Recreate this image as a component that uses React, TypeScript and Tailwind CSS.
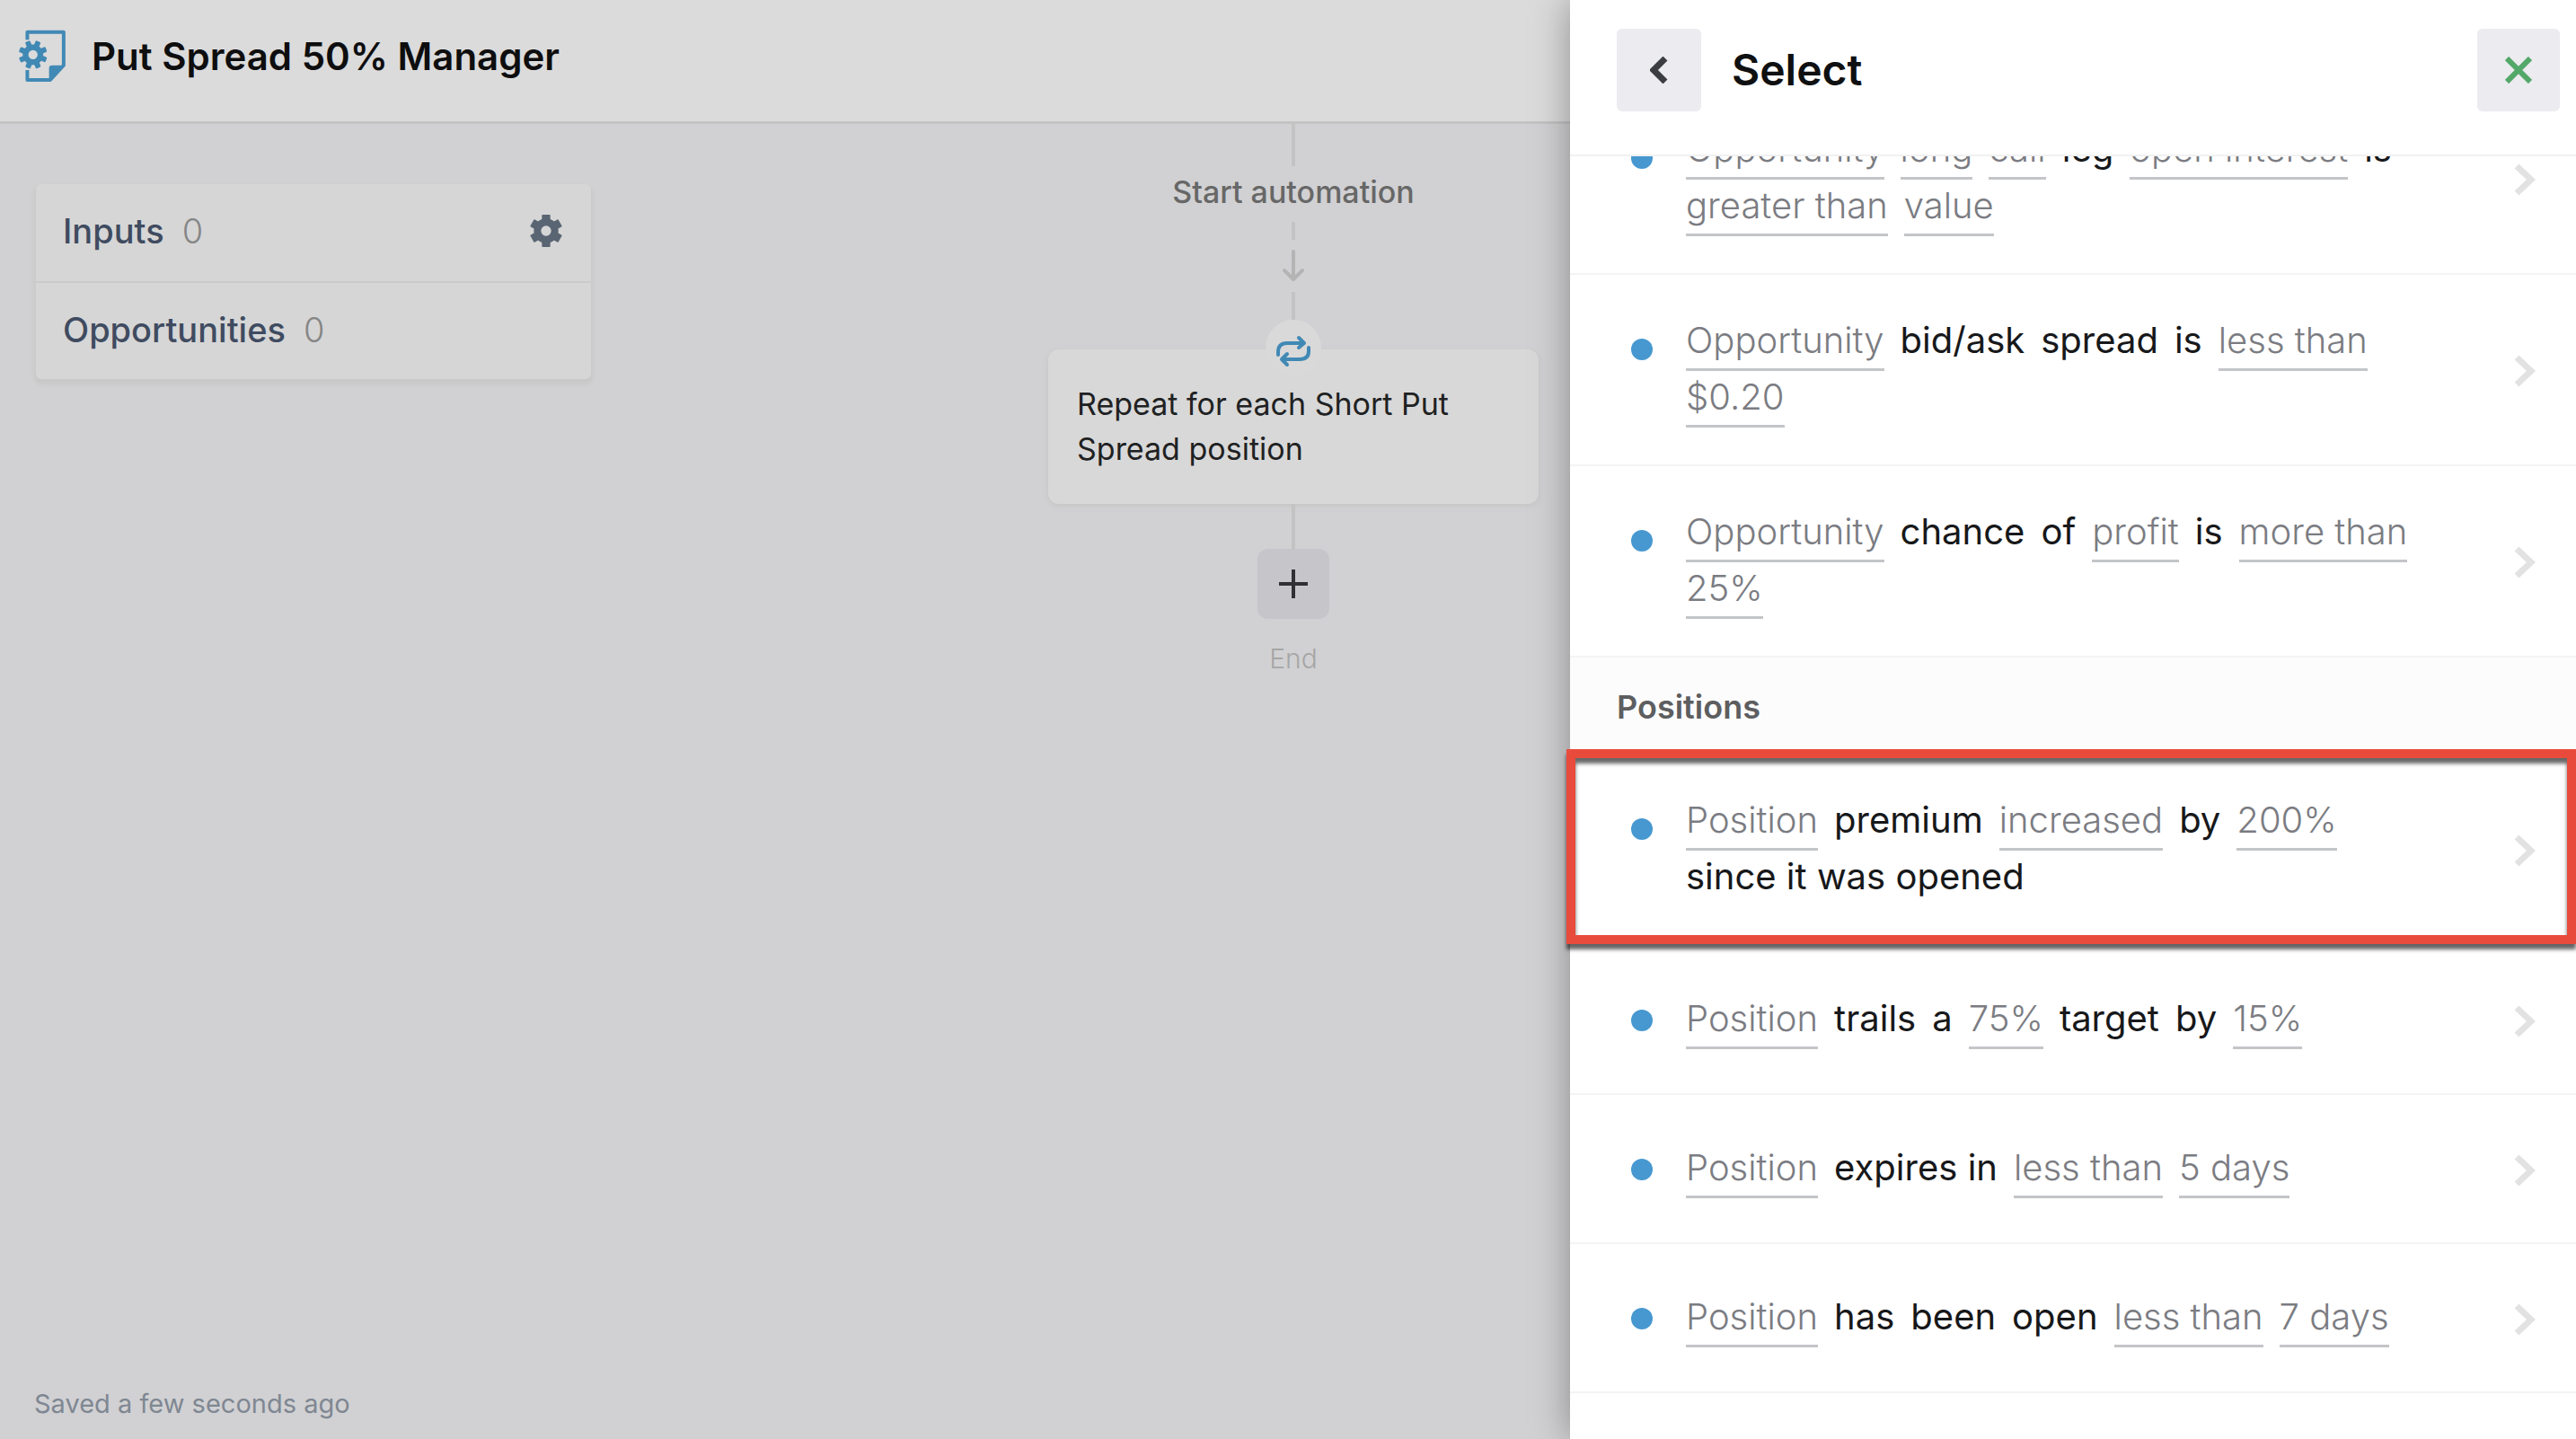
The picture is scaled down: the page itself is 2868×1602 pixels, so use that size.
interface Token {
  text: string;
  param?: boolean;
}

interface Condition {
  tokens: Token[];
  highlighted?: boolean;
}

const p = (text: string): Token => ({ text, param: true });
const w = (text: string): Token => ({ text });

const OPPORTUNITY_CONDITIONS: Condition[] = [
  {
    tokens: [
      p("Opportunity"),
      p("long"),
      p("call"),
      w("leg"),
      p("open interest"),
      w("is"),
      p("greater than"),
      p("value"),
    ],
  },
  {
    tokens: [p("Opportunity"), w("bid/ask"), w("spread"), w("is"), p("less than"), p("$0.20")],
  },
  {
    tokens: [p("Opportunity"), w("chance"), w("of"), p("profit"), w("is"), p("more than"), p("25%")],
  },
];

const POSITION_CONDITIONS: Condition[] = [
  {
    tokens: [
      p("Position"),
      w("premium"),
      p("increased"),
      w("by"),
      p("200%"),
      w("since it was opened"),
    ],
    highlighted: true,
  },
  {
    tokens: [p("Position"), w("trails"), w("a"), p("75%"), w("target"), w("by"), p("15%")],
  },
  {
    tokens: [p("Position"), w("expires in"), p("less than"), p("5 days")],
  },
  {
    tokens: [p("Position"), w("has"), w("been"), w("open"), p("less than"), p("7 days")],
  },
];

const SMALL_GEAR_TEETH = [22, 67, 112, 157, 202, 247, 292, 337];
const GEAR_TEETH = [0, 60, 120, 180, 240, 300];

function AutomationIcon() {
  return (
    <svg viewBox="0 0 162 178" className="h-[59px] w-[54px] shrink-0 text-[#4189b5]" aria-hidden="true">
      <path
        d="M31 34V8H153V120L108 169H31V136"
        fill="none"
        stroke="currentColor"
        strokeWidth="12"
        strokeLinejoin="round"
      />
      <path d="M104 172V130Q104 120 114 120H157L108 173Z" fill="currentColor" />
      <g transform="translate(50 84)" fill="currentColor">
        {SMALL_GEAR_TEETH.map((angle) => (
          <rect key={angle} x="-9" y="-48" width="18" height="22" rx="4" transform={`rotate(${angle})`} />
        ))}
      </g>
      <circle cx="50" cy="84" r="25" fill="none" stroke="currentColor" strokeWidth="19" />
    </svg>
  );
}

function GearIcon() {
  return (
    <svg viewBox="-54 -54 108 108" className="h-9 w-9" fill="currentColor" aria-hidden="true">
      {GEAR_TEETH.map((angle) => (
        <rect key={angle} x="-14" y="-54" width="28" height="26" rx="3" transform={`rotate(${angle})`} />
      ))}
      <circle r="29" fill="none" stroke="currentColor" strokeWidth="24" />
    </svg>
  );
}

function RepeatIcon() {
  return (
    <svg viewBox="0 0 40 36" className="h-9 w-10 text-[#4189b5]" aria-hidden="true">
      <g fill="none" stroke="currentColor" strokeWidth="4" strokeLinecap="round" strokeLinejoin="round">
        <path d="M3 22V19Q3 9 13 9H31M26 3L32 9L26 14" />
        <path d="M37 14V18Q37 27 27 27H8M13 21L7 27L13 33" />
      </g>
    </svg>
  );
}

function Chevron() {
  return (
    <svg viewBox="0 0 24 36" className="h-9 w-6 shrink-0 text-[#e2e2e2]" aria-hidden="true">
      <path d="M3 3L19 18L3 33" fill="none" stroke="currentColor" strokeWidth="7" />
    </svg>
  );
}

function Line({ className }: { className: string }) {
  return <div className={`w-1 bg-[#c3c3c3] ${className}`} />;
}

function ConditionRow({ tokens, highlighted = false }: Condition) {
  return (
    <li className="relative border-b-2 border-[#f4f4f5]">
      <button
        type="button"
        className="flex min-h-[164px] w-full items-center pb-[41px] pl-[68px] pr-[45px] pt-11 text-left text-[40px] leading-[57px]"
      >
        <span className="mr-[37px] mt-[27px] h-6 w-6 shrink-0 self-start rounded-full bg-[#4798d0]" />
        <span className="flex max-w-[840px] flex-1 flex-wrap gap-x-[18px]">
          {tokens.map((token, i) => (
            <span
              key={i}
              className={
                token.param
                  ? "border-b-[3px] border-[#c3c5c8] pb-[3px] font-light text-[#7b7c82]"
                  : "pb-[6px] text-[#17181a]"
              }
            >
              {token.text}
            </span>
          ))}
        </span>
        <span className="ml-auto">
          <Chevron />
        </span>
      </button>
      {highlighted && (
        <div className="pointer-events-none absolute -left-1 -top-1.5 bottom-0 right-0 border-[10px] border-[#e84b3c] shadow-[0_6px_4px_rgba(0,0,0,0.6),inset_0_6px_4px_rgba(0,0,0,0.6)]" />
      )}
    </li>
  );
}

function SelectPanel() {
  return (
    <aside className="relative flex w-[1120px] shrink-0 flex-col bg-white shadow-[0_0_40px_rgba(0,0,0,0.35)]">
      <header className="flex items-start border-b-2 border-[#f1f1f2] pb-12 pl-[52px] pr-[18px] pt-8">
        <button
          type="button"
          aria-label="Back"
          className="flex h-[92px] w-[94px] items-center justify-center rounded-md bg-[#ebebf0]"
        >
          <svg viewBox="0 0 20 30" className="h-[30px] w-5 text-[#3c3d42]" aria-hidden="true">
            <path d="M17 2L4 15L17 28" fill="none" stroke="currentColor" strokeWidth="7" />
          </svg>
        </button>
        <h2 className="ml-[34px] text-[48px] font-semibold leading-[92px] text-[#0f1011]">Select</h2>
        <button
          type="button"
          aria-label="Close"
          className="ml-auto flex h-[92px] w-[92px] items-center justify-center rounded-md bg-[#ebebf0]"
        >
          <svg viewBox="0 0 30 30" className="h-[30px] w-[30px] text-[#53a869]" aria-hidden="true">
            <path d="M2 2L28 28M28 2L2 28" fill="none" stroke="currentColor" strokeWidth="6" />
          </svg>
        </button>
      </header>
      <div className="min-h-0 flex-1 overflow-y-clip">
        <ul className="-mt-[81px]">
          {OPPORTUNITY_CONDITIONS.map((condition, i) => (
            <ConditionRow key={i} {...condition} />
          ))}
        </ul>
        <h3 className="bg-[#fcfcfc] pb-[27px] pl-[52px] pt-[29px] text-[36px] font-semibold leading-[52px] text-[#5d5e60]">
          Positions
        </h3>
        <ul>
          {POSITION_CONDITIONS.map((condition, i) => (
            <ConditionRow key={i} {...condition} />
          ))}
        </ul>
      </div>
    </aside>
  );
}

function InputsCard() {
  return (
    <section className="mt-[67px] w-[618px] self-start rounded-md bg-[#d6d6d6] text-[38px] leading-[54px] shadow-[0_4px_4px_2px_#c8c8c8]">
      <div className="flex h-[110px] items-center border-b-2 border-[#cbcbcb] pb-1 pl-[30px] pr-8">
        <span className="font-medium text-[#3f4b60]">Inputs</span>
        <span className="ml-5 font-light text-[#868686]">0</span>
        <button type="button" aria-label="Input settings" className="ml-auto text-[#5a6573]">
          <GearIcon />
        </button>
      </div>
      <div className="flex h-[107px] items-center pb-1 pl-[30px] pr-8">
        <span className="font-medium text-[#3f4b60]">Opportunities</span>
        <span className="ml-5 font-light text-[#868686]">0</span>
      </div>
    </section>
  );
}

function AutomationFlow() {
  return (
    <section className="flex w-[546px] flex-col items-center">
      <Line className="h-[47px]" />
      <p className="mb-2 mt-1 text-[34px] font-medium leading-[50px] text-[#676767]">Start automation</p>
      <Line className="h-5" />
      <svg viewBox="0 0 24 36" className="my-[11px] h-9 w-6 text-[#b4b4b4]" aria-hidden="true">
        <path
          d="M12 2V32M2 23L12 33L22 23"
          fill="none"
          stroke="currentColor"
          strokeWidth="4"
          strokeLinecap="round"
          strokeLinejoin="round"
        />
      </svg>
      <Line className="h-[31px]" />
      <div className="z-10 -mb-[29px] flex h-[62px] w-[62px] items-center justify-center rounded-full bg-[#d9d9d9] pt-2">
        <RepeatIcon />
      </div>
      <button
        type="button"
        className="w-full rounded-xl bg-[#d8d8d8] px-8 pb-9 pt-9 text-left text-[34px] leading-[50px] text-[#202122] shadow-[0_2px_6px_#c4c4c4]"
      >
        Repeat for each Short Put Spread position
      </button>
      <Line className="h-[50px]" />
      <button
        type="button"
        aria-label="Add step"
        className="flex h-[78px] w-20 items-center justify-center rounded-xl bg-[#c5c5ca]"
      >
        <svg viewBox="0 0 32 32" className="h-8 w-8 text-[#303036]" aria-hidden="true">
          <path d="M16 0V32M0 16H32" stroke="currentColor" strokeWidth="4" />
        </svg>
      </button>
      <p className="mt-5 text-[30px] font-light leading-[48px] text-[#a6a6a6]">End</p>
    </section>
  );
}

export default function App() {
  return (
    <div className="flex h-screen overflow-hidden bg-[#d1d1d3] font-[Inter,'Liberation_Sans',sans-serif]">
      <main className="flex min-w-0 flex-1 flex-col">
        <header className="flex h-[138px] shrink-0 items-start gap-7 border-b-[3px] border-[#c3c3c3] bg-[#dbdbdb] pl-5 pt-[33px]">
          <AutomationIcon />
          <h1 className="text-[42px] font-semibold leading-[60px] text-[#0e0e0f]">Put Spread 50% Manager</h1>
        </header>
        <div className="flex flex-1 justify-between pl-10 pr-[35px]">
          <InputsCard />
          <AutomationFlow />
        </div>
        <footer className="px-[38px] pb-[17px] text-[29px] leading-[44px] text-[#7f8792]">
          Saved a few seconds ago
        </footer>
      </main>
      <SelectPanel />
    </div>
  );
}
